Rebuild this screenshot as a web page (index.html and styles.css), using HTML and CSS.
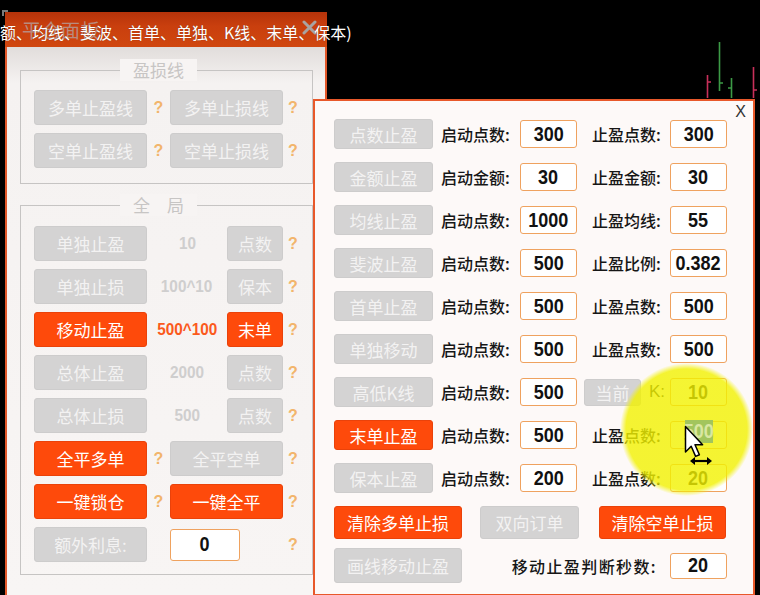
FILE: index.html
```html
<!DOCTYPE html>
<html lang="zh-CN">
<head>
<meta charset="utf-8">
<title>平仓面板</title>
<link rel="stylesheet" href="styles.css">
</head>
<body>
<div class="screen">
  <svg class="chart" width="760" height="100" viewBox="0 0 760 100">
    <g stroke-width="1.6" fill="none">
      <path d="M707.5 75 V98 M707.5 82 H711" stroke="#c8305a"/>
      <path d="M719.5 42 V91 M719.5 83 H723" stroke="#3c9a46"/>
      <path d="M731.5 78 V98 M731.5 88 H728" stroke="#3c9a46"/>
      <path d="M753.5 67 V98 M753.5 90 H757" stroke="#c8305a"/>
    </g>
  </svg>
  <div class="corner"></div>

  <div class="win left-win">
    <div class="titlebar">
      <span class="title">平仓面板</span>
      <svg class="tclose" width="15" height="15" viewBox="0 0 15 15"><path d="M2 2 L13 13 M13 2 L2 13" stroke="#a9a3a1" stroke-width="3" stroke-linecap="round"/></svg>
    </div>
    <div class="lbody">
      <div class="fs fs1">
        <div class="legend">盈损线</div>
        <div class="rows">
          <div class="row">
            <div class="btn g w113">多单止盈线</div><span class="q qa">?</span>
            <div class="btn g w113">多单止损线</div><span class="q qb">?</span>
          </div>
          <div class="row">
            <div class="btn g w113">空单止盈线</div><span class="q qa">?</span>
            <div class="btn g w113">空单止损线</div><span class="q qb">?</span>
          </div>
        </div>
      </div>

      <div class="fs fs2">
        <div class="legend">全　局</div>
        <div class="rows">
          <div class="row">
            <div class="btn g w113">单独止盈</div><span class="val"><span class="num">10</span></span>
            <div class="btn g w56">点数</div><span class="q qb">?</span>
          </div>
          <div class="row">
            <div class="btn g w113">单独止损</div><span class="val"><span class="num">100^10</span></span>
            <div class="btn g w56">保本</div><span class="q qb">?</span>
          </div>
          <div class="row">
            <div class="btn o w113">移动止盈</div><span class="val hot"><span class="num">500^100</span></span>
            <div class="btn o w56">末单</div><span class="q qb">?</span>
          </div>
          <div class="row">
            <div class="btn g w113">总体止盈</div><span class="val"><span class="num">2000</span></span>
            <div class="btn g w56">点数</div><span class="q qb">?</span>
          </div>
          <div class="row">
            <div class="btn g w113">总体止损</div><span class="val"><span class="num">500</span></span>
            <div class="btn g w56">点数</div><span class="q qb">?</span>
          </div>
          <div class="row">
            <div class="btn o w113">全平多单</div><span class="q qa">?</span>
            <div class="btn g w113">全平空单</div><span class="q qb">?</span>
          </div>
          <div class="row">
            <div class="btn o w113">一键锁仓</div><span class="q qa">?</span>
            <div class="btn o w113">一键全平</div><span class="q qb">?</span>
          </div>
          <div class="row">
            <div class="btn g w113">额外利息:</div><span class="qa"></span>
            <div class="inp inp-l"><span class="num">0</span></div><span class="spacer"></span><span class="q qb">?</span>
          </div>
        </div>
      </div>
    </div>
  </div>

  <div class="win right-win">
    <span class="rclose">X</span>
    <div class="rrows">
      <div class="rrow">
        <div class="btn g rb">点数止盈</div>
        <span class="lab l1">启动点数:</span><div class="inp"><span class="num">300</span></div>
        <span class="lab l2">止盈点数:</span><div class="inp"><span class="num">300</span></div>
      </div>
      <div class="rrow">
        <div class="btn g rb">金额止盈</div>
        <span class="lab l1">启动金额:</span><div class="inp"><span class="num">30</span></div>
        <span class="lab l2">止盈金额:</span><div class="inp"><span class="num">30</span></div>
      </div>
      <div class="rrow">
        <div class="btn g rb">均线止盈</div>
        <span class="lab l1">启动点数:</span><div class="inp"><span class="num">1000</span></div>
        <span class="lab l2">止盈均线:</span><div class="inp"><span class="num">55</span></div>
      </div>
      <div class="rrow">
        <div class="btn g rb">斐波止盈</div>
        <span class="lab l1">启动点数:</span><div class="inp"><span class="num">500</span></div>
        <span class="lab l2">止盈比例:</span><div class="inp"><span class="num">0.382</span></div>
      </div>
      <div class="rrow">
        <div class="btn g rb">首单止盈</div>
        <span class="lab l1">启动点数:</span><div class="inp"><span class="num">500</span></div>
        <span class="lab l2">止盈点数:</span><div class="inp"><span class="num">500</span></div>
      </div>
      <div class="rrow">
        <div class="btn g rb">单独移动</div>
        <span class="lab l1">启动点数:</span><div class="inp"><span class="num">500</span></div>
        <span class="lab l2">止盈点数:</span><div class="inp"><span class="num">500</span></div>
      </div>
      <div class="rrow">
        <div class="btn g rb">高低K线</div>
        <span class="lab l1">启动点数:</span><div class="inp"><span class="num">500</span></div>
        <div class="btn g cur">当前</div><span class="lab lk">K:</span><div class="inp"><span class="num">10</span></div>
      </div>
      <div class="rrow">
        <div class="btn o rb">末单止盈</div>
        <span class="lab l1">启动点数:</span><div class="inp"><span class="num">500</span></div>
        <span class="lab l2">止盈点数:</span><div class="inp"><span class="num">500</span></div>
      </div>
      <div class="rrow">
        <div class="btn g rb">保本止盈</div>
        <span class="lab l1">启动点数:</span><div class="inp"><span class="num">200</span></div>
        <span class="lab l2">止盈点数:</span><div class="inp"><span class="num">20</span></div>
      </div>
      <div class="rrow r10">
        <div class="btn o wb1">清除多单止损</div>
        <div class="btn g wb2">双向订单</div>
        <div class="btn o wb3">清除空单止损</div>
      </div>
      <div class="rrow r11">
        <div class="btn g wb1 tall">画线移动止盈</div>
        <span class="lab lsec">移动止盈判断秒数:</span><div class="inp short"><span class="num">20</span></div>
      </div>
    </div>
  </div>

  <div class="caption">额、均线、斐波、首单、单独、K线、末单、保本)</div>
  <div class="spot"></div>
  <div class="sel"><span class="num">500</span></div>
  <svg class="cursor" width="34" height="42" viewBox="0 0 34 42">
    <path d="M1.5 1.5 L1.5 27 L7.2 21.3 L11.6 31.4 L15.4 29.7 L11 19.8 L18.6 19.8 Z" fill="#ffffff" stroke="#000" stroke-width="1.5" stroke-linejoin="round"/>
    <path d="M9 36 H25" stroke="#000" stroke-width="2.2"/>
    <path d="M6 36 L11 32 L11 40 Z M28 36 L23 32 L23 40 Z" fill="#000"/>
  </svg>
</div>
</body>
</html>
```

FILE: styles.css
```css
* { box-sizing: border-box; }

html, body {
  margin: 0;
  padding: 0;
  background: #000;
}

body {
  width: 760px;
  height: 595px;
  overflow: hidden;
  font-family: "Noto Sans CJK SC", "Liberation Sans", sans-serif;
}

.screen {
  position: relative;
  width: 760px;
  height: 595px;
  background: #000;
  overflow: hidden;
}

.chart {
  position: absolute;
  left: 0;
  top: 0;
}

.corner {
  position: absolute;
  left: 2px;
  top: 10px;
  width: 6px;
  height: 6px;
  border-top: 2px solid #7a7a7a;
  border-left: 2px solid #7a7a7a;
}

.win {
  position: absolute;
}

/* ---------- left window ---------- */
.left-win {
  left: 5px;
  top: 12px;
  width: 322px;
  height: 584px;
  display: flex;
  flex-direction: column;
}

.titlebar {
  height: 35px;
  flex: none;
  display: flex;
  justify-content: space-between;
  align-items: flex-start;
  padding: 0 10px 0 17px;
  background: linear-gradient(#b5330a, #c93f0e 40%, #d0470f);
}

.title {
  margin-top: 5px;
  font-size: 19px;
  line-height: 26px;
  color: #b98b7e;
  letter-spacing: 0.5px;
}

.tclose {
  margin-top: 8px;
}

.lbody {
  flex: 1;
  border-left: 2px solid #e2582a;
  border-right: 2px solid #e2582a;
  background: linear-gradient(#e1dddb, #f5f2f1 36px, #f8f5f4);
  padding: 23px 0 0 13px;
  display: flex;
  flex-direction: column;
}

.fs {
  width: 293px;
  border: 1px solid #c6c4c3;
  display: flex;
  flex-direction: column;
}

.fs2 {
  margin-top: 21px;
}

.legend {
  align-self: flex-start;
  margin: -12px 0 0 99px;
  padding: 0 13px;
  height: 22px;
  line-height: 22px;
  font-size: 17px;
  color: #c7c5c4;
  background: #f7f4f3;
}

.rows {
  display: flex;
  flex-direction: column;
  gap: 8px;
  padding: 0 0 0 13px;
}

.fs1 .rows {
  margin-top: 9px;
  padding-bottom: 15px;
}

.fs2 .rows {
  margin-top: 10px;
  padding-bottom: 12px;
}

.row {
  display: flex;
  align-items: center;
  height: 35px;
}

.btn {
  display: flex;
  align-items: center;
  justify-content: center;
  font-size: 17px;
  border-radius: 3px;
  white-space: nowrap;
  height: 100%;
}

.btn.g {
  background: #d4d3d3;
  color: #f3f2f2;
  border: 1px solid #cdcccc;
}

.btn.o {
  background: #fe4a0b;
  color: #ffffff;
  border: 1px solid #ea420a;
}

.w113 { width: 113px; }
.w56 { width: 56px; }

.q {
  display: flex;
  justify-content: center;
  font-family: "Liberation Sans", sans-serif;
  font-weight: bold;
  font-size: 16px;
  color: #f2b56c;
}

.qa { width: 23px; flex: none; }
.qb { width: 20px; flex: none; }

.val {
  width: 80px;
  display: flex;
  justify-content: center;
  font-family: "Liberation Sans", sans-serif;
  font-weight: bold;
  font-size: 17px;
  color: #cfcece;
}

.val.hot {
  color: #fb5a1c;
}

.num {
  display: inline-block;
  transform: scaleX(0.9);
}

.spacer {
  width: 43px;
  flex: none;
}

.inp {
  width: 57px;
  height: 28px;
  display: flex;
  align-items: center;
  justify-content: center;
  background: #ffffff;
  border: 1px solid #efa25f;
  border-radius: 3px;
  font-family: "Liberation Sans", sans-serif;
  font-weight: bold;
  font-size: 20px;
  color: #111111;
}

.inp-l {
  width: 70px;
  height: 32px;
}

/* ---------- right window ---------- */
.right-win {
  left: 313px;
  top: 99px;
  width: 442px;
  height: 497px;
  background: #fdf9f8;
  border: 2px solid #e8582a;
  padding: 18px 0 0 19px;
}

.rclose {
  position: absolute;
  right: 7px;
  top: 2px;
  font-family: "Liberation Sans", sans-serif;
  font-size: 16px;
  line-height: 18px;
  color: #333333;
}

.rrows {
  display: flex;
  flex-direction: column;
  gap: 13px;
}

.rrow {
  display: flex;
  align-items: center;
  height: 30px;
}

.rb {
  width: 99px;
  margin-right: 8px;
}

.lab {
  font-size: 16px;
  font-weight: 500;
  color: #161616;
  white-space: nowrap;
}

.l1 { width: 79px; }
.l2 { width: 78px; margin-left: 15px; }

.cur {
  width: 57px;
  height: 27px;
  margin-left: 7px;
}

.lk {
  width: 29px;
  padding-left: 8px;
  font-family: "Liberation Sans", sans-serif;
  font-size: 17px;
}

.r10 {
  height: 33px;
}

.wb1 { width: 128px; }
.wb2 { width: 99px; margin-left: 18px; }
.wb3 { width: 127px; margin-left: 20px; }

.r11 {
  height: 35px;
  margin-top: -4px;
}

.lsec {
  margin-left: auto;
  margin-right: 13px;
  letter-spacing: 1.4px;
}

.inp.short {
  height: 26px;
  margin-right: 26px;
}

/* ---------- overlays ---------- */
.caption {
  position: absolute;
  left: 0;
  top: 21px;
  font-size: 16px;
  line-height: 22px;
  color: #ffffff;
  white-space: nowrap;
  text-shadow: 0 0 1px rgba(0, 0, 0, 0.4);
}

.spot {
  position: absolute;
  left: 620px;
  top: 363px;
  width: 133px;
  height: 133px;
  border-radius: 50%;
  background: radial-gradient(circle closest-side, rgba(242, 242, 0, 0.8) 91%, rgba(242, 242, 0, 0) 100%);
}

.sel {
  position: absolute;
  left: 685px;
  top: 420px;
  width: 28px;
  height: 23px;
  background: #a2c55d;
  overflow: hidden;
  display: flex;
  justify-content: center;
  align-items: center;
  font-family: "Liberation Sans", sans-serif;
  font-weight: bold;
  font-size: 20px;
  color: #d9e7a2;
}

.cursor {
  position: absolute;
  left: 684px;
  top: 425px;
}
```
